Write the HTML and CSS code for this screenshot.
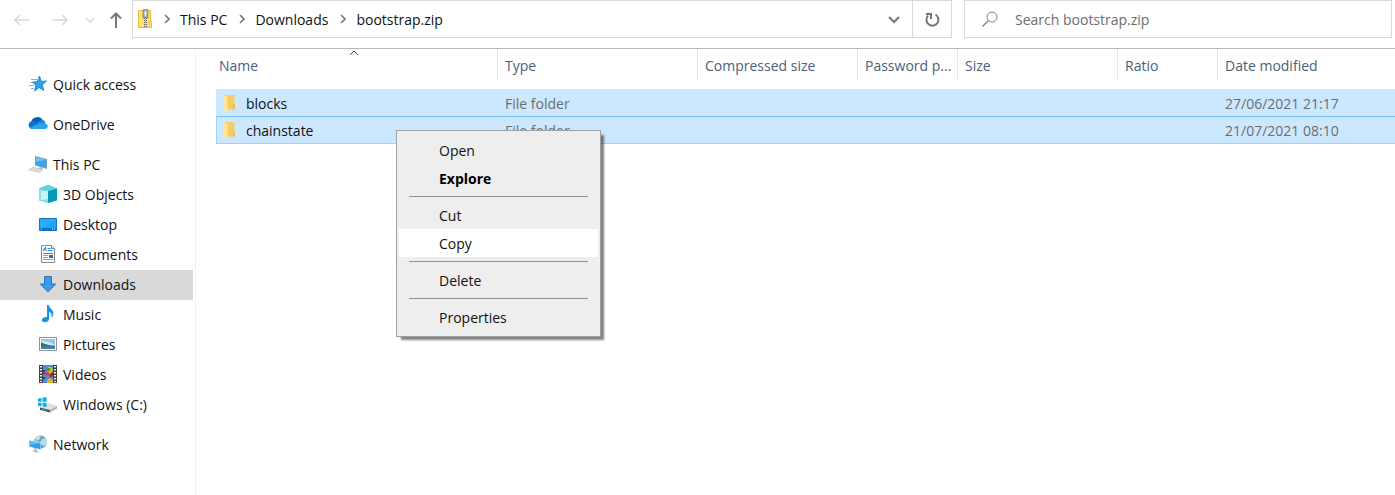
FILE: index.html
```html
<!DOCTYPE html>
<html lang="en">
<head>
<meta charset="utf-8">
<title>bootstrap.zip</title>
<link rel="stylesheet" href="styles.css">
</head>
<body>
<div class="window">
  <header class="toolbar">
    <nav class="history" aria-label="History">
      <button class="tool" aria-label="Back" disabled><svg width="16" height="12" viewBox="0 0 16 12"><path d="M15.500 6H1M6 1 1 6l5 5" stroke="#d9d9d9" stroke-width="1.600" fill="none"/></svg></button>
      <button class="tool" aria-label="Forward" disabled><svg width="16" height="12" viewBox="0 0 16 12"><path d="M.5 6H15M10 1l5 5-5 5" stroke="#d9d9d9" stroke-width="1.600" fill="none"/></svg></button>
      <button class="tool tool-recent" aria-label="Recent locations" disabled><svg width="10" height="6" viewBox="0 0 10 6"><path d="M1 1l4 4 4-4" stroke="#d9d9d9" stroke-width="1.600" fill="none"/></svg></button>
      <button class="tool tool-up" aria-label="Up"><svg width="12" height="16" viewBox="0 0 12 16"><path d="M6 16V1.500M1 6.500l5-5 5 5" stroke="#777" stroke-width="2" fill="none"/></svg></button>
    </nav>
    <div class="address">
      <svg class="zip" width="14" height="20" viewBox="0 0 14 20"><path d="M.5 1.500h12v10.500h1v6.500H.5z" fill="#ffe07d" stroke="#e9bd35"/><path d="M11.500 12v6" stroke="#efc64c"/><path d="M5 1q2.500-2 5 0v8H5z" fill="#a9adb3" stroke="#777b82" stroke-width=".8"/><path d="M7.500 2.500v4" stroke="#fff" stroke-width="1.500"/><path d="M7.500 9v10" stroke="#66615a" stroke-width="3" stroke-dasharray="1 1"/><path d="M7.500 9v10" stroke="#c5bfae" stroke-width="1"/></svg>
      <svg class="crumb-sep" width="6" height="10" viewBox="0 0 6 10"><path d="M1 1l4 4-4 4" stroke="#777" stroke-width="1.600" fill="none"/></svg>
      <a class="crumb" href="#pc">This PC</a>
      <svg class="crumb-sep" width="6" height="10" viewBox="0 0 6 10"><path d="M1 1l4 4-4 4" stroke="#777" stroke-width="1.600" fill="none"/></svg>
      <a class="crumb" href="#downloads">Downloads</a>
      <svg class="crumb-sep" width="6" height="10" viewBox="0 0 6 10"><path d="M1 1l4 4-4 4" stroke="#777" stroke-width="1.600" fill="none"/></svg>
      <a class="crumb" href="#zip">bootstrap.zip</a>
      <button class="tool address-drop" aria-label="Previous locations"><svg width="12" height="8" viewBox="0 0 12 8"><path d="M1 1l5 5 5-5" stroke="#777" stroke-width="2" fill="none"/></svg></button>
      <button class="tool refresh" aria-label="Refresh"><svg width="16" height="16" viewBox="0 0 16 16"><path d="M11.500 2.500A6 6 0 1 1 4 3.600" stroke="#777" stroke-width="2" fill="none"/><path d="M2 2h5v5" stroke="#777" stroke-width="2" fill="none"/></svg></button>
    </div>
    <label class="search">
      <svg width="16" height="16" viewBox="0 0 16 16"><circle cx="10" cy="6" r="5" stroke="#808080" fill="none"/><path d="M6.500 9.500.5 15.500" stroke="#808080" stroke-width="1.200"/></svg>
      <input class="search-input" type="text" placeholder="Search bootstrap.zip" aria-label="Search bootstrap.zip">
    </label>
  </header>
  <div class="body">
    <nav class="sidebar" aria-label="Folders">
      <div class="group">
        <a class="place" href="#quick"><svg class="icon" width="20" height="20" viewBox="0 0 20 20"><path d="M11.500 2l1.600 5.300 5.500-.3-4.300 3.800 1.600 5.800-4.800-3-4.500 3.500 1.200-5.800-3.500-3.300 5-.3z" fill="#29a3e8" stroke="#1380c8" stroke-width=".8"/><path d="M3 5.500h6M2 8.500h2M1 11.500h5M3 14.500h3" stroke="#6bbdec"/></svg>Quick access</a>
      </div>
      <div class="group">
        <a class="place" href="#onedrive"><svg class="icon" width="20" height="20" viewBox="0 1 20 20"><path d="M3 9a6.500 6.500 0 0 1 12-1.500l-5 5z" fill="#0b5cb3"/><path d="M4 16a4 4 0 0 1-.5-7.800Q6 7.500 8 9l8 6z" fill="#0f74ce"/><path d="M9 10q3-4 6.500-2.800 2 .8 2 3L13 13z" fill="#1588dd"/><path d="M1.500 14.800 12.500 10l3.500.5q3.800.2 3.800 3-.3 2.500-3.300 2.500H4q-1.500 0-2.500-1.200z" fill="#29a5e9"/></svg>OneDrive</a>
      </div>
      <div class="group">
        <a class="place" href="#pc"><svg class="icon" width="20" height="20" viewBox="0 0 20 20"><path d="M7 2l12 3v10L7 11.500z" fill="#8797a5"/><path d="M8 3.200l10.200 2.600v7.700L8 10.500z" fill="#36a5f0"/><path d="M8 3.200l10.200 2.600L8 8z" fill="#69c3fa"/><path d="M12 13l3 1-1 2-4-1z" fill="#b7bdc2"/><path d="M5 13l10 2.800-3.500 2.700L.5 15.800z" fill="#e4e6e8" stroke="#b8bec3" stroke-width=".6"/><path d="M4 14l9 2.500M3 15l9 2.300" stroke="#b6bbc1" stroke-width=".6" stroke-dasharray="1 .6"/></svg>This PC</a>
        <a class="place sub" href="#objects"><svg class="icon" width="20" height="20" viewBox="0 0 20 20"><path d="M10 1l9 3.500v11.700L10 19l-9-2.800V4.500z" fill="#30bfd0"/><path d="M1 4.500 10 7v12l-9-2.800z" fill="#8ce0e8"/><path d="M3 7l7-.5V15l-7 1z" fill="#c8f4f2"/><path d="M10 7l9-2.500v11.700L10 19z" fill="#0799b6"/><path d="M1 4.500 10 1l9 3.500L10 7z" fill="#5ed4dc"/></svg>3D Objects</a>
        <a class="place sub" href="#desktop"><svg class="icon" width="20" height="20" viewBox="0 0 20 20"><path d="M1.500 4.500h17v12h-17z" fill="#1ba3fb" stroke="#1273bd"/><path d="M2 5h16L7 13H2z" fill="#3bb2ff" opacity=".6"/><path d="M2 15h16" stroke="#0d65aa" stroke-width="1.500"/><path d="M3 15h1m10 0h1m1 0h1" stroke="#d9f1ff"/></svg>Desktop</a>
        <a class="place sub" href="#documents"><svg class="icon" width="20" height="20" viewBox="0 0 20 20"><path d="M3.500 1.500h10l3 3v14h-13z" fill="#fafafa" stroke="#8b8b8b"/><path d="M13.500 1.500v3h3" fill="#ddd" stroke="#8b8b8b"/><path d="M5 7l2.500-4L8 7M5.500 5.500h2M9.500 4.500h3M9.500 6.500h5M5 9.500h10" stroke="#2993df" fill="none"/><path d="M5 11.500h5M5 13.500h5M5 15.500h10" stroke="#a2a2a2"/><path d="M11 11h4v3h-4z" fill="#34709f"/></svg>Documents</a>
        <a class="place sub current" href="#downloads" aria-current="page"><svg class="icon" width="20" height="20" viewBox="0 0 20 20"><path d="M6.500 2.500h7V10h4.200L10 18 2.300 10h4.200z" fill="#3d9be9" stroke="#2679c3"/></svg>Downloads</a>
        <a class="place sub" href="#music"><svg class="icon" width="20" height="20" viewBox="0 0 20 20"><path d="M9 1h1.800q.3 2.600 2.600 4.300 3.500 3 .8 8h-.8q1-4.300-2.400-5.300V15q-.5 3.300-4.300 3.300-3-.2-2.800-2.500.6-3 5.100-2.800z" fill="#1495e9"/></svg>Music</a>
        <a class="place sub" href="#pictures"><svg class="icon" width="20" height="20" viewBox="0 0 20 20"><path d="M1.500 3.500h17v13h-17z" fill="#fff" stroke="#929292"/><path d="M3 5h14v10H3z" fill="#8cc9f2"/><path d="M3 7q7 0 14 4H3z" fill="#d6edf8"/><path d="M3 8q5 3 14 4v3H3z" fill="#397163"/><path d="M3 12.500q8-1 14 0V15H3z" fill="#427ea9"/></svg>Pictures</a>
        <a class="place sub" href="#videos"><svg class="icon" width="20" height="20" viewBox="0 0 20 20"><path d="M1 1h18v18H1z" fill="#414141"/><path d="M5 1h10v18H5z" fill="#5487dc"/><path d="M3 2v16M17 2v16" stroke="#eee" stroke-width="2" stroke-dasharray="1.500 1.500"/><path d="M5 9.500h10" stroke="#333"/><path d="M10 3h4l1 4-3 3h-3z" fill="#deb925"/><path d="M7 8h4v3H7z" fill="#d54a2d"/><path d="M11 10h4v2l-3 2z" fill="#a83025"/><path d="M9 4h3v3H9z" fill="#47972e"/><path d="M9 16l3-2 3 2v3H9z" fill="#e0b329"/><path d="M5 6h2v2H5zM5 13h2v2H5z" fill="#263d77"/></svg>Videos</a>
        <a class="place sub" href="#c"><svg class="icon" width="20" height="20" viewBox="0 0 20 20"><path d="M2 14l8-5 9 3-7 4z" fill="#dedede"/><path d="M2 13.500l10 2.500v2.500L2 16z" fill="#555b5d"/><path d="M12 16l7-4v2.500l-7 4z" fill="#b1b3b4"/><path d="M4 15.500l3 .7" stroke="#49bc69"/><path d="M0 4.500 3.500 4v3.700H0zM4.500 3.800 8.500 3v4.700h-4zM0 8.700h3.500v3.600L0 12zM4.500 8.700h4V13l-4-.6z" fill="#00b2e8"/></svg>Windows (C:)</a>
      </div>
      <div class="group">
        <a class="place" href="#network"><svg class="icon" width="20" height="20" viewBox="0 0 20 20"><circle cx="12.500" cy="8" r="6.500" fill="#6a9fbe"/><path d="M8 3q3-2 5 0l-2 3-4 1zM14 5l4-1q2 4 0 7l-3 1-3-3z" fill="#b9dce9"/><path d="M1 6l12 2v8L1 13z" fill="#d3e6f0"/><path d="M1.500 6.800 12.500 9v6.300L1.500 12.500z" fill="#319fe8"/><path d="M1.500 6.800 12.500 9 1.500 11z" fill="#61bdf6"/><path d="M6 14l3 1v2l2 1-3 .8L4 17l2-.5z" fill="#b7bec3"/></svg>Network</a>
      </div>
    </nav>
    <main class="content">
      <table class="files">
        <colgroup><col class="col-name"><col class="col-type"><col class="col-csize"><col class="col-small"><col class="col-csize"><col class="col-small"><col></colgroup>
        <thead>
          <tr>
            <th aria-sort="ascending"><span class="head head-name">Name</span><svg class="sort" width="10" height="6" viewBox="0 0 10 6"><path d="M1 5l4-4 4 4" stroke="#555" fill="none"/></svg></th>
            <th><span class="head">Type</span></th>
            <th><span class="head">Compressed size</span></th>
            <th><span class="head">Password p...</span></th>
            <th><span class="head">Size</span></th>
            <th><span class="head">Ratio</span></th>
            <th><span class="head head-last">Date modified</span></th>
          </tr>
        </thead>
        <tbody>
          <tr class="file">
            <td><span class="filename"><svg class="icon" width="12" height="18" viewBox="0 0 12 18"><path d="M0 1h11.500v14.500H4z" fill="#f5cc65"/><path d="M0 .5 4.500 3v14.500L0 15.500z" fill="#ffe59b"/><path d="M10 10h2v5.500h-2z" fill="#efbf4e"/></svg>blocks</span></td>
            <td>File folder</td><td></td><td></td><td></td><td></td><td>27/06/2021 21:17</td>
          </tr>
          <tr class="file focused">
            <td><span class="filename"><svg class="icon" width="12" height="18" viewBox="0 0 12 18"><path d="M0 1h11.500v14.500H4z" fill="#f5cc65"/><path d="M0 .5 4.500 3v14.500L0 15.500z" fill="#ffe59b"/><path d="M10 10h2v5.500h-2z" fill="#efbf4e"/></svg>chainstate</span></td>
            <td>File folder</td><td></td><td></td><td></td><td></td><td>21/07/2021 08:10</td>
          </tr>
        </tbody>
      </table>
      <div class="menu" role="menu">
        <button class="menu-item" role="menuitem">Open</button>
        <button class="menu-item default" role="menuitem">Explore</button>
        <hr class="menu-line">
        <button class="menu-item" role="menuitem">Cut</button>
        <button class="menu-item active" role="menuitem">Copy</button>
        <hr class="menu-line">
        <button class="menu-item" role="menuitem">Delete</button>
        <hr class="menu-line">
        <button class="menu-item" role="menuitem">Properties</button>
      </div>
    </main>
  </div>
</div>
</body>
</html>
```

FILE: styles.css
```css
* { box-sizing: border-box; }

body {
  margin: 0;
  background: #fff;
  color: #111;
  font: 14px/20px "Open Sans", "Noto Sans", sans-serif;
}

button, input {
  margin: 0;
  padding: 0;
  border: 0;
  background: none;
  color: inherit;
  font: inherit;
}

a { color: inherit; text-decoration: none; }
svg { display: block; flex: none; }

.window { display: flex; flex-direction: column; min-height: 100vh; }

.toolbar {
  display: grid;
  grid-template-columns: 132px minmax(0, 832fr) minmax(0, 428fr);
  height: 49px;
  padding: 0 3px 10px 0;
  border-bottom: 1px solid #b9b9b9;
}

.history { display: flex; align-items: center; gap: 22px; padding: 2px 0 0 14px; }
.tool { display: flex; align-items: center; justify-content: center; }
.tool-recent { margin: 0 -7px 0 -5px; }

.address {
  display: flex;
  align-items: center;
  margin-right: 12px;
  border: 1px solid #d9d9d9;
}
.zip { margin-left: 5px; }
.crumb { padding-top: 2px; }
.crumb-sep { margin: 0 10px 0 12px; }
.address-drop { align-self: stretch; width: 38px; margin-left: auto; padding-top: 2px; border-right: 1px solid #d9d9d9; }
.refresh { align-self: stretch; width: 38px; padding-top: 2px; }

.search {
  display: flex;
  align-items: center;
  gap: 17px;
  padding-left: 17px;
  border: 1px solid #d9d9d9;
}
.search-input { flex: 1; min-width: 0; padding-top: 2px; outline: 0; }
.search-input::placeholder { color: #6d6d6d; opacity: 1; }

.body { display: flex; flex: 1; }

.sidebar {
  display: flex;
  flex-direction: column;
  gap: 10px;
  flex: none;
  width: 196px;
  padding: 21px 2px 0 0;
  border-right: 1px solid #f2f2f2;
}
.place { display: flex; align-items: center; gap: 5px; height: 30px; padding-left: 28px; }
.icon { margin-bottom: 2px; }
.sub { padding-left: 38px; }
.current { height: 30px; background: #d9d9d9; }

.content { position: relative; flex: 1; min-width: 0; padding-left: 20px; }

.files { width: 100%; table-layout: fixed; border-collapse: separate; border-spacing: 0; }
.col-name { width: 282px; }
.col-type { width: 200px; }
.col-csize { width: 160px; }
.col-small { width: 100px; }

.files th { position: relative; padding: 0 0 8px; font-weight: 400; text-align: left; color: #4c607a; }
.head {
  display: block;
  height: 32px;
  padding-left: 7px;
  border-right: 1px solid #e5e5e5;
  line-height: 34px;
  white-space: nowrap;
}
.head-name { padding-left: 3px; }
.head-last { border-right: 0; }
.sort { position: absolute; top: 1px; left: 133px; }

.file td { height: 27px; padding: 2px 0 0 7px; background: #cce8ff; color: #6d6d6d; white-space: nowrap; }
.file td:first-child { color: #111; }
.focused td { height: 28px; border-top: 1px solid #7ac1fb; border-bottom: 1px solid #99d1ff; }
.focused td:first-child { padding-left: 6px; border-left: 1px solid #99d1ff; }
.filename { display: flex; align-items: center; gap: 11px; }

.menu {
  position: absolute;
  top: 81px;
  left: 200px;
  width: 205px;
  padding: 5px 2px;
  border: 1px solid #a0a0a0;
  background: #eee;
  box-shadow: 4px 4px 2px -1px rgba(0, 0, 0, .5);
}
.menu-item { display: block; width: 100%; height: 28px; padding: 2px 0 0 40px; text-align: left; }
.default { font-weight: 700; color: #000; }
.active { background: #fff; }
.menu-line { height: 1px; margin: 4px 10px; border: 0; background: #919191; }
```
